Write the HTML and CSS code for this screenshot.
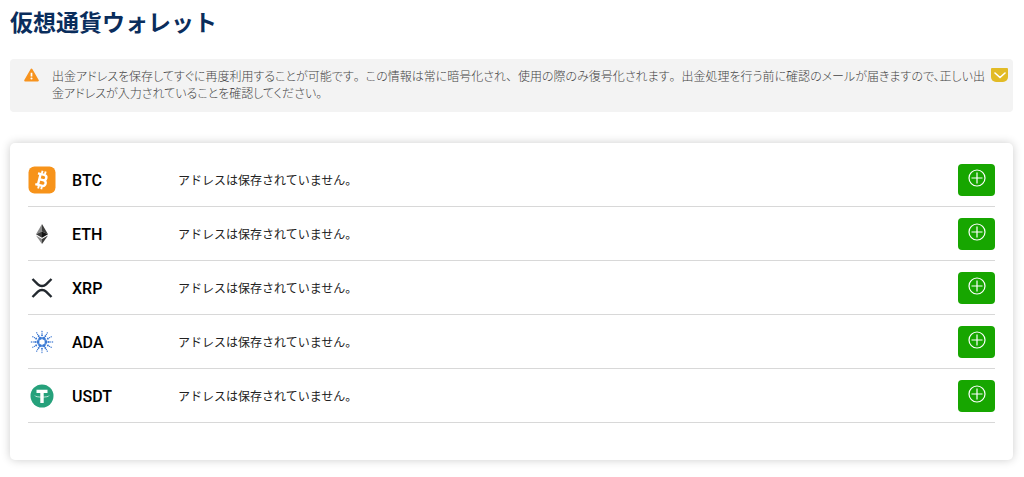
FILE: index.html
```html
<!DOCTYPE html>
<html lang="ja">
<head>
<meta charset="UTF-8">
<meta name="viewport" content="width=device-width, initial-scale=1.0">
<title>仮想通貨ウォレット</title>
<link rel="stylesheet" href="styles.css">
</head>
<body>
    <!-- plus icon shared by the add buttons -->
    <svg class="defs" width="0" height="0" aria-hidden="true">
        <symbol id="plus" viewBox="0 0 18 18">
            <circle cx="9" cy="9" r="8" fill="none" stroke="currentColor" stroke-width="1.2"/>
            <path d="M9 3.500v11M3.500 9h11" fill="none" stroke="currentColor" stroke-width="1.200"/>
        </symbol>
    </svg>

    <h1>仮想通貨ウォレット</h1>

    <div class="notice">
        <svg class="warning" viewBox="0 0 16 14" aria-hidden="true">
            <path d="M8 1.200L14.800 12.800H1.200z" fill="#f7931e" stroke="#f7931e" stroke-width="2" stroke-linejoin="round"/>
            <path d="M8 4.600v4" stroke="#fff" stroke-width="1.800"/>
            <circle cx="8" cy="10.800" r="1.100" fill="#fff"/>
        </svg>
        <p>出金アドレスを保存してすぐに再度利用することが可能です<span class="mark">。</span>この情報は常に暗号化され<span class="mark">、</span>使用の際のみ復号化されます<span class="mark">。</span>出金処理を行う前に確認のメールが届きますので、正しい出金アドレスが入力されていることを確認してください。</p>
        <button type="button" class="toggle" aria-label="開閉">
            <svg viewBox="0 0 12 7" aria-hidden="true"><path d="M1 1l5 4.500L11 1" fill="none" stroke="#fff" stroke-width="1.600" stroke-linecap="round"/></svg>
        </button>
    </div>

    <ul class="wallets">
        <li>
            <svg class="coin" viewBox="0 0 28 28" aria-hidden="true">
                <rect x=".5" y=".5" width="27" height="27" rx="6" fill="#f7931a"/>
                <g transform="rotate(14 14 14)" fill="none" stroke="#fff" stroke-width="2.400">
                    <path d="M8.500 8.500H15a2.700 2.700 0 0 1 0 5.400H11M15 13.900h1a2.900 2.900 0 0 1 0 5.700H8.500M11.200 8.500v11"/>
                    <path d="M12.300 4.800v3M15.500 4.800v3M12.300 20.200v3M15.500 20.200v3" stroke-width="1.900"/>
                </g>
            </svg>
            <span class="code">BTC</span>
            <span class="status">アドレスは保存されていません。</span>
            <button type="button" class="add" aria-label="BTCを追加"><svg aria-hidden="true"><use href="#plus"/></svg></button>
        </li>
        <li>
            <svg class="coin" viewBox="0 0 28 28" aria-hidden="true">
                <path d="M14 4l-6 10.200 6-2.700z" fill="#8a8a8a"/>
                <path d="M14 4l6 10.200-6-2.700z" fill="#3c3c3b"/>
                <path d="M8 14.200l6-2.700v6.300z" fill="#3a3a3a"/>
                <path d="M20 14.200l-6-2.700v6.300z" fill="#141414"/>
                <path d="M8 15.600l6 3.500V24z" fill="#8c8c8c"/>
                <path d="M20 15.600l-6 3.500V24z" fill="#3c3c3b"/>
            </svg>
            <span class="code">ETH</span>
            <span class="status">アドレスは保存されていません。</span>
            <button type="button" class="add" aria-label="ETHを追加"><svg aria-hidden="true"><use href="#plus"/></svg></button>
        </li>
        <li>
            <svg class="coin" viewBox="0 0 28 28" aria-hidden="true">
                <path d="M4.500 5l5.400 5.300a5.800 5.800 0 0 0 8.200 0L23.500 5M4.500 23l5.400-5.300a5.800 5.800 0 0 1 8.200 0L23.500 23" fill="none" stroke="#23292f" stroke-width="2.400"/>
            </svg>
            <span class="code">XRP</span>
            <span class="status">アドレスは保存されていません。</span>
            <button type="button" class="add" aria-label="XRPを追加"><svg aria-hidden="true"><use href="#plus"/></svg></button>
        </li>
        <li>
            <svg class="coin" viewBox="0 0 28 28" aria-hidden="true">
                <!-- inner ring, then the dots that spread out from it -->
                <circle cx="14" cy="14" r="3.800" fill="none" stroke="#5a93e0" stroke-width="2.200"/>
                <g fill="none" stroke="#3c78d2" stroke-linecap="round">
                    <circle cx="14" cy="14" r="4.200" pathLength="6" stroke-width="2.800" stroke-dasharray="0.010 0.990"/>
                    <circle cx="14" cy="14" r="6.800" pathLength="12" stroke-width="1.900" stroke-dasharray="0.010 0.990"/>
                    <circle cx="14" cy="14" r="8.800" pathLength="12" stroke-width="1.300" stroke-dasharray="0.010 0.990"/>
                    <circle cx="14" cy="14" r="10.600" pathLength="12" stroke-width="1.300" stroke-dasharray="0.010 0.990"/>
                </g>
            </svg>
            <span class="code">ADA</span>
            <span class="status">アドレスは保存されていません。</span>
            <button type="button" class="add" aria-label="ADAを追加"><svg aria-hidden="true"><use href="#plus"/></svg></button>
        </li>
        <li>
            <svg class="coin" viewBox="0 0 28 28" aria-hidden="true">
                <circle cx="14" cy="14" r="11.500" fill="#26a17b"/>
                <path d="M8.500 7.800h11V11h-3.800v10h-3.400V11H8.500z" fill="#fff"/>
                <path d="M7 13.600c0 2 14 2 14 0" fill="none" stroke="#fff" stroke-width=".7"/>
            </svg>
            <span class="code">USDT</span>
            <span class="status">アドレスは保存されていません。</span>
            <button type="button" class="add" aria-label="USDTを追加"><svg aria-hidden="true"><use href="#plus"/></svg></button>
        </li>
    </ul>
</body>
</html>
```
FILE: styles.css
```css
* {
    box-sizing: border-box;
}

body {
    margin: 0;
    padding: 9px 11px 16px 10px;
    background-color: #fff;
    font-family: Roboto, "Noto Sans CJK JP", sans-serif;
    font-size: 12px;
    color: #222;
}

.defs {
    display: block;
}

h1 {
    margin: 0 0 20px;
    font-size: 23px;
    line-height: 30px;
    font-weight: 700;
    color: #0a2d5c;
}

.notice {
    display: flex;
    align-items: flex-start;
    padding: 9px 5px 9px 14px;
    background-color: #f3f3f3;
    border-radius: 4px;
}

.warning {
    flex: none;
    width: 15px;
    height: 14px;
    margin-right: 13px;
}

.notice p {
    flex: 1;
    margin: 0;
    padding-top: 1px;
    line-height: 17px;
    color: #444;
    font-weight: 300;
    font-feature-settings: "palt";
}

/* punctuation between sentences keeps its full width */
.mark {
    font-feature-settings: normal;
}

.toggle {
    display: flex;
    align-items: center;
    justify-content: center;
    width: 17px;
    height: 14px;
    padding: 0;
    border: 0;
    border-radius: 1px 1px 5px 5px;
    background-color: #e2bb26;
    cursor: pointer;
}

.toggle svg {
    width: 12px;
    height: 7px;
}

.wallets {
    list-style: none;
    margin: 31px 0 0;
    padding: 10px 18px 37px;
    border-radius: 5px;
    box-shadow: 0 0 10px rgba(0, 0, 0, 0.2);
}

.wallets li {
    display: flex;
    align-items: center;
    padding: 11px 0 10px;
    border-bottom: 1px solid #d8d8d8;
}

.coin {
    width: 28px;
    height: 28px;
    margin-right: 16px;
}

.code {
    width: 106px;
    font-size: 16px;
    font-weight: 500;
    color: #000;
}

.status {
    flex: 1;
    padding-bottom: 2px;
}

.add {
    display: flex;
    justify-content: center;
    width: 37px;
    height: 32px;
    padding: 5px 0 0;
    border: 0;
    border-radius: 4px;
    background-color: #17a600;
    color: #fff;
    cursor: pointer;
}

.add svg {
    width: 18px;
    height: 18px;
}
```
